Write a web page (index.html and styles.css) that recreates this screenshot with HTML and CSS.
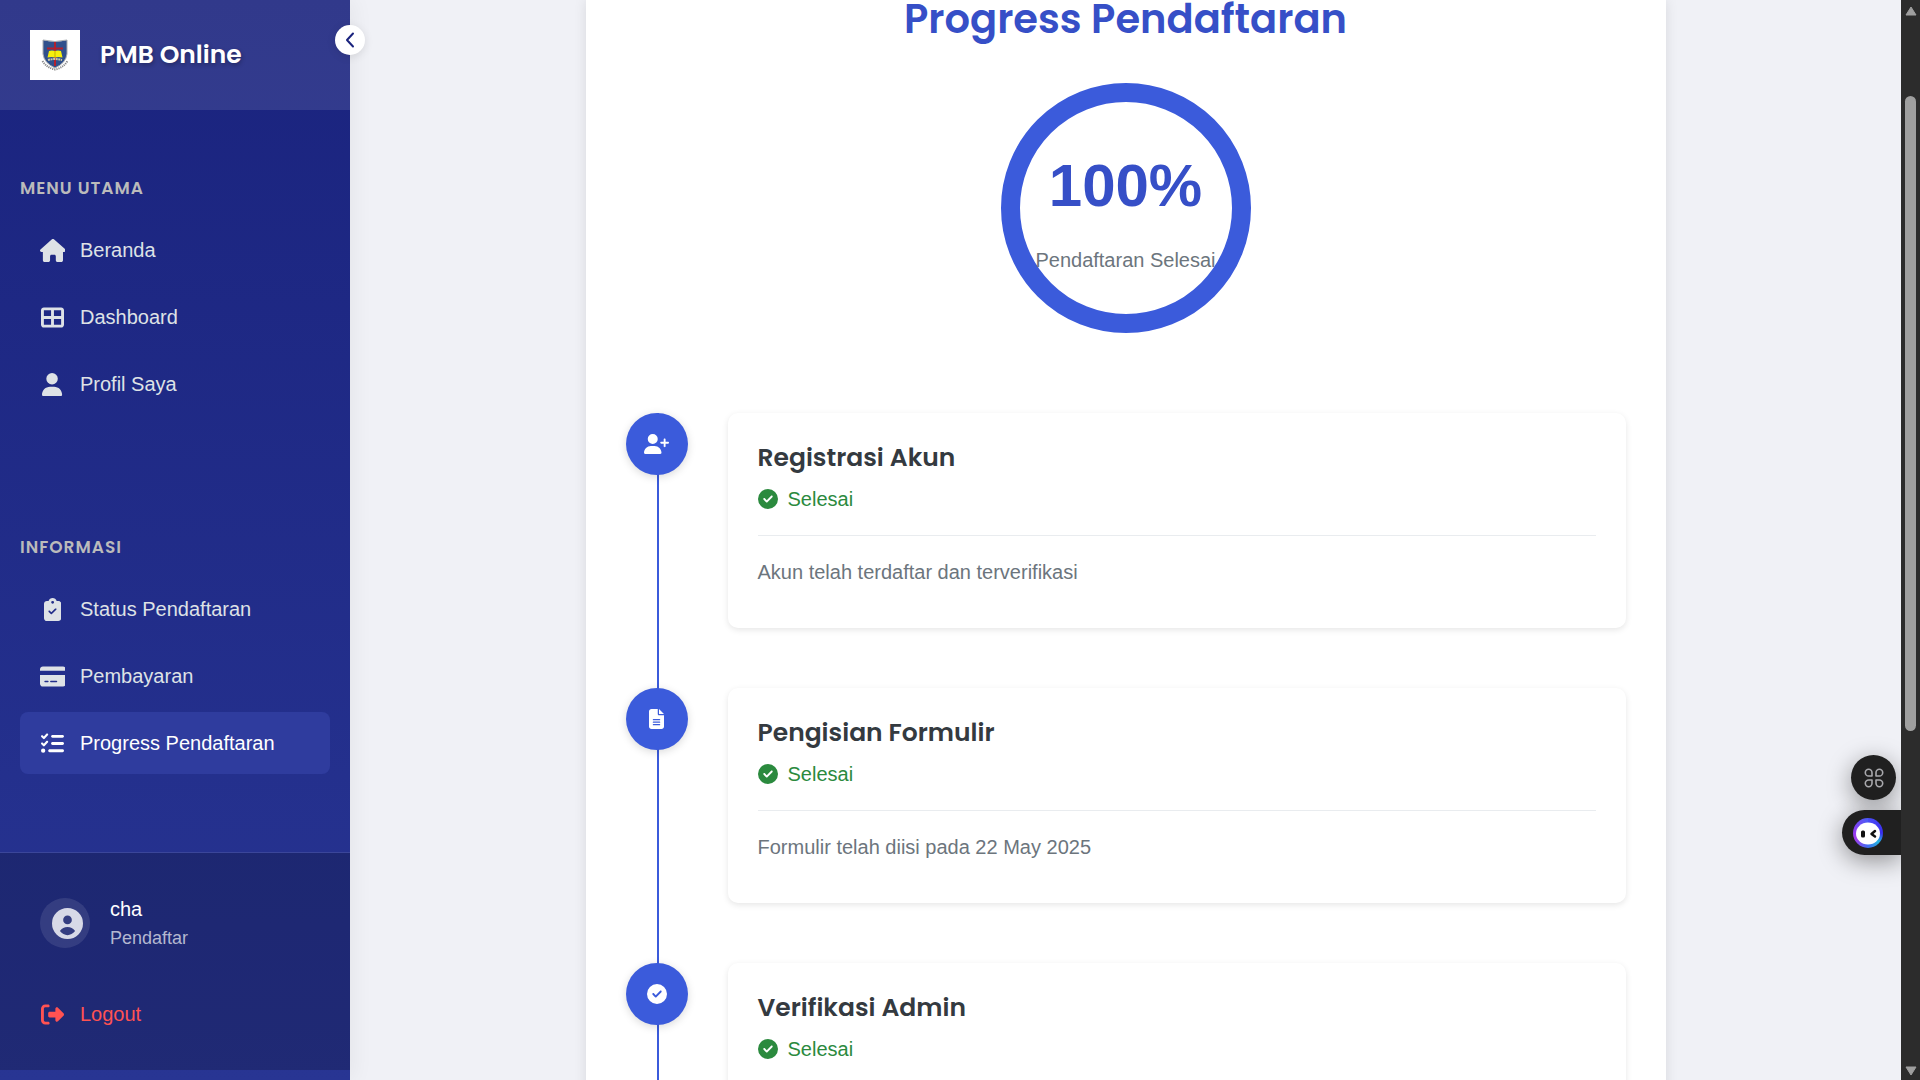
FILE: index.html
```html
<!DOCTYPE html>
<html lang="id">
<head>
<meta charset="utf-8">
<meta name="viewport" content="width=device-width, initial-scale=1">
<title>Progress Pendaftaran - PMB Online</title>
<link rel="stylesheet" href="styles.css">
</head>
<body>
<svg class="sprite" aria-hidden="true">
  <symbol id="check" viewBox="0 0 512 512"><path d="M256 512A256 256 0 1 0 256 0a256 256 0 1 0 0 512zM369 209L241 337c-9.4 9.4-24.6 9.4-33.9 0l-64-64c-9.4-9.4-9.4-24.6 0-33.9s24.6-9.4 33.9 0l47 47L335 175c9.4-9.4 24.6-9.4 33.9 0s9.4 24.6 0 33.9z"/></symbol>
</svg>
<aside class="sidebar">
  <header class="brand">
    <svg class="logo" viewBox="0 0 50 50" role="img" aria-label="Logo">
      <rect width="50" height="50" fill="#fff"/>
      <path d="M13 10Q25 13 37 10V24Q36 33 25 38Q14 33 13 24Z" fill="#30508c" stroke="#a9adb0" stroke-width="1"/>
      <path d="M24 12h2v24h-2zM17 17.500h16v2H17z" fill="#b3202c"/>
      <path d="M19 21q3-1 6 0q3-1 6 0l1.500 6.500q-4-1-7.500 0q-3.500-1-7.500 0z" fill="#f6ee0c"/>
      <path d="M25 21v6" stroke="#c3b400" stroke-width="1"/>
      <path d="M18 30q7-2 14 0" fill="none" stroke="#c9c8a8" stroke-width="2" stroke-dasharray="2 .6"/>
      <path d="M12.500 31Q17 38 25 39.500Q33 38 37.500 31" fill="none" stroke="#898989" stroke-width="2" stroke-dasharray="1.200 .9"/>
    </svg>
    <span class="brand-name">PMB Online</span>
  </header>
  <button class="toggle" type="button" aria-label="Tutup menu"><svg viewBox="0 0 10 18"><path d="M8 2.500 2 9l6 6.500"/></svg></button>
  <nav class="menu">
    <section class="menu-group">
      <h2 class="menu-title">MENU UTAMA</h2>
      <a class="item" href="#"><span class="icon"><svg viewBox="0 0 576 512"><path d="M575.8 255.5c0 18-15 32.1-32 32.1h-32l.7 160.2c0 2.7-.2 5.4-.5 8.1V472c0 22.1-17.9 40-40 40H456c-1.1 0-2.2 0-3.3-.1c-1.4 .1-2.8 .1-4.2 .1H416 392c-22.1 0-40-17.9-40-40V448 384c0-17.7-14.3-32-32-32H256c-17.7 0-32 14.3-32 32v64 24c0 22.1-17.9 40-40 40H160 128.1c-1.5 0-3-.1-4.5-.2c-1.2 .1-2.4 .2-3.6 .2H104c-22.1 0-40-17.9-40-40V360c0-.9 0-1.9 .1-2.8V287.6H32c-18 0-32-14-32-32.1c0-9 3-17 10-24L266.4 8c7-7 15-8 22-8s15 2 21 7L564.8 231.5c8 7 12 15 11 24z"/></svg></span>Beranda</a>
      <a class="item" href="#"><span class="icon"><svg viewBox="0 0 512 512"><path d="M448 96V224H288V96H448zm0 192V416H288V288H448zM224 224H64V96H224V224zM64 288H224V416H64V288zM64 32C28.700 32 0 60.700 0 96V416c0 35.300 28.700 64 64 64H448c35.300 0 64-28.700 64-64V96c0-35.300-28.700-64-64-64H64z"/></svg></span>Dashboard</a>
      <a class="item" href="#"><span class="icon"><svg viewBox="0 0 448 512"><path d="M224 256A128 128 0 1 0 224 0a128 128 0 1 0 0 256zm-45.7 48C79.8 304 0 383.8 0 482.3C0 498.7 13.3 512 29.7 512H418.3c16.4 0 29.7-13.3 29.7-29.7C448 383.8 368.2 304 269.7 304H178.3z"/></svg></span>Profil Saya</a>
    </section>
    <section class="menu-group">
      <h2 class="menu-title">INFORMASI</h2>
      <a class="item" href="#"><span class="icon"><svg viewBox="0 0 384 512"><path d="M192 0c-41.8 0-77.4 26.7-90.5 64H64C28.7 64 0 92.7 0 128V448c0 35.3 28.7 64 64 64H320c35.3 0 64-28.7 64-64V128c0-35.3-28.7-64-64-64H282.5C269.4 26.7 233.8 0 192 0zm0 64a32 32 0 1 1 0 64 32 32 0 1 1 0-64zM273 262L177 358c-7 7-18.500 7-25.400 0L103.600 310c-7-7-7-18.500 0-25.400s18.500-7 25.400 0l35.300 35.300L247.600 236.500c7-7 18.500-7 25.400 0s7 18.500 0 25.400z"/></svg></span>Status Pendaftaran</a>
      <a class="item" href="#"><span class="icon"><svg viewBox="0 0 576 512"><path d="M64 32C28.7 32 0 60.7 0 96v32H576V96c0-35.3-28.7-64-64-64H64zM576 224H0V416c0 35.3 28.7 64 64 64H512c35.3 0 64-28.7 64-64V224zM112 352h64c8.8 0 16 7.2 16 16s-7.2 16-16 16H112c-8.8 0-16-7.2-16-16s7.2-16 16-16zm112 16c0-8.8 7.2-16 16-16H368c8.8 0 16 7.2 16 16s-7.2 16-16 16H240c-8.8 0-16-7.2-16-16z"/></svg></span>Pembayaran</a>
      <a class="item active" href="#" aria-current="page"><span class="icon"><svg viewBox="0 0 512 512"><path d="M152.1 38.2c9.9 8.9 10.7 24 1.8 33.9l-72 80c-4.4 4.9-10.6 7.8-17.2 7.9s-12.9-2.4-17.6-7L7 113C-2.3 103.6-2.3 88.4 7 79s24.6-9.4 33.9 0l22.1 22.1 55.1-61.2c8.9-9.900 24-10.700 33.900-1.800zm0 160c9.900 8.900 10.700 24 1.800 33.900l-72 80c-4.400 4.900-10.600 7.800-17.200 7.900s-12.900-2.400-17.600-7L7 273c-9.400-9.400-9.400-24.600 0-33.900s24.600-9.400 33.900 0l22.100 22.100 55.100-61.200c8.900-9.900 24-10.700 33.900-1.800zM224 96c0-17.700 14.300-32 32-32H480c17.700 0 32 14.300 32 32s-14.300 32-32 32H256c-17.700 0-32-14.300-32-32zm0 160c0-17.700 14.300-32 32-32H480c17.700 0 32 14.300 32 32s-14.300 32-32 32H256c-17.700 0-32-14.300-32-32zM160 416c0-17.700 14.300-32 32-32H480c17.700 0 32 14.300 32 32s-14.300 32-32 32H192c-17.700 0-32-14.300-32-32zM48 368a48 48 0 1 1 0 96 48 48 0 1 1 0-96z"/></svg></span>Progress Pendaftaran</a>
    </section>
  </nav>
  <footer class="account">
    <div class="user">
      <span class="avatar"><svg viewBox="0 0 20 20"><path fill-rule="evenodd" d="M10 0a10 10 0 1 1 0 20a10 10 0 1 1 0-20zM10 4.900a2.800 2.800 0 1 0 0 5.600a2.800 2.800 0 1 0 0-5.600zM5.100 14.900C6.500 16.600 8.200 17.500 10 17.500S13.500 16.600 14.900 14.900C13.700 13.200 12 12.300 10 12.300S6.300 13.200 5.100 14.900z"/></svg></span>
      <div class="who"><span class="user-name">cha</span><span class="role">Pendaftar</span></div>
    </div>
    <a class="item logout" href="#"><span class="icon"><svg viewBox="0 0 512 512"><path d="M377.9 105.9L500.7 228.7c7.2 7.2 11.3 17.1 11.3 27.3s-4.1 20.1-11.3 27.3L377.9 406.1c-6.4 6.4-15 9.9-24 9.9c-18.7 0-33.9-15.2-33.9-33.9l0-62.1-128 0c-17.7 0-32-14.3-32-32l0-64c0-17.7 14.3-32 32-32l128 0 0-62.1c0-18.7 15.2-33.9 33.9-33.9c9 0 17.6 3.6 24 9.9zM160 96L96 96c-17.700 0-32 14.300-32 32l0 256c0 17.700 14.300 32 32 32l64 0c17.700 0 32 14.300 32 32s-14.300 32-32 32l-64 0c-53 0-96-43-96-96L0 128C0 75 43 32 96 32l64 0c17.700 0 32 14.300 32 32s-14.300 32-32 32z"/></svg></span>Logout</a>
  </footer>
</aside>
<main class="content">
  <div class="panel">
    <h1 class="page-title">Progress Pendaftaran</h1>
    <div class="ring"><strong class="percent">100%</strong><span class="ring-label">Pendaftaran Selesai</span></div>
    <ol class="steps">
      <li class="step">
        <span class="marker"><svg viewBox="0 0 640 512"><path d="M96 128a128 128 0 1 1 256 0A128 128 0 1 1 96 128zM0 482.3C0 383.8 79.8 304 178.3 304h91.4C368.2 304 448 383.8 448 482.3c0 16.4-13.3 29.7-29.7 29.7H29.7C13.3 512 0 498.7 0 482.3zM504 312V248H440c-13.3 0-24-10.7-24-24s10.7-24 24-24h64V136c0-13.3 10.7-24 24-24s24 10.7 24 24v64h64c13.3 0 24 10.7 24 24s-10.7 24-24 24H552v64c0 13.3-10.7 24-24 24s-24-10.7-24-24z"/></svg></span>
        <article class="step-card"><h3 class="step-title">Registrasi Akun</h3><p class="status"><svg><use href="#check"/></svg>Selesai</p><p class="detail">Akun telah terdaftar dan terverifikasi</p></article>
      </li>
      <li class="step">
        <span class="marker"><svg viewBox="0 0 384 512"><path d="M64 0C28.7 0 0 28.7 0 64V448c0 35.3 28.7 64 64 64H320c35.3 0 64-28.7 64-64V160H256c-17.7 0-32-14.3-32-32V0H64zM256 0V128H384L256 0zM112 256H272c8.8 0 16 7.2 16 16s-7.2 16-16 16H112c-8.8 0-16-7.2-16-16s7.2-16 16-16zm0 64H272c8.8 0 16 7.2 16 16s-7.2 16-16 16H112c-8.8 0-16-7.2-16-16s7.2-16 16-16zm0 64H272c8.8 0 16 7.2 16 16s-7.2 16-16 16H112c-8.8 0-16-7.2-16-16s7.2-16 16-16z"/></svg></span>
        <article class="step-card"><h3 class="step-title">Pengisian Formulir</h3><p class="status"><svg><use href="#check"/></svg>Selesai</p><p class="detail">Formulir telah diisi pada 22 May 2025</p></article>
      </li>
      <li class="step">
        <span class="marker"><svg viewBox="0 0 512 512"><use href="#check"/></svg></span>
        <article class="step-card"><h3 class="step-title">Verifikasi Admin</h3><p class="status"><svg><use href="#check"/></svg>Selesai</p><p class="detail"></p></article>
      </li>
    </ol>
  </div>
</main>
<div class="floating">
  <button class="apps" type="button" aria-label="Aplikasi"><svg viewBox="0 0 20 20"><path d="M8 8H4.650A3.350 3.350 0 1 1 8 4.650zM12 8h3.350A3.350 3.350 0 1 0 12 4.650zM8 12H4.650A3.350 3.350 0 1 0 8 15.350zM12 12h3.350A3.350 3.350 0 1 1 12 15.350z"/></svg></button>
  <button class="assistant" type="button" aria-label="Asisten"><span class="face"><svg viewBox="0 0 30 30"><ellipse cx="15" cy="15.500" rx="12" ry="11" fill="#fff"/><rect x="8" y="12.500" width="4" height="7" rx="1.500" fill="#111"/><path d="M22 13l-3.500 3 3.500 2.500" fill="none" stroke="#111" stroke-width="2.500" stroke-linecap="round" stroke-linejoin="round"/></svg></span></button>
</div>
<div class="scrollbar" aria-hidden="true">
  <svg viewBox="0 0 12 10"><path d="M6 1 11 9H1z"/></svg>
  <div class="track"><div class="thumb"></div></div>
  <svg viewBox="0 0 12 10"><path d="M6 9 1 1h10z"/></svg>
</div>
</body>
</html>
```
FILE: styles.css
```css
* { box-sizing: border-box; }
body {
  margin: 0;
  height: 100vh;
  overflow: hidden;
  display: flex;
  background: #f0f1f6;
  font: 20px/30px "Liberation Sans", Arial, sans-serif;
}
h1, h2, h3, p, ol { margin: 0; padding: 0; }
button { border: 0; padding: 0; cursor: pointer; }
a { text-decoration: none; }
.sprite { position: absolute; width: 0; height: 0; }

.sidebar {
  position: relative;
  z-index: 1;
  flex: 0 0 350px;
  display: flex;
  flex-direction: column;
  padding-bottom: 10px;
  background: linear-gradient(180deg, #1a237e, #283593);
  box-shadow: 4px 0 20px rgba(0, 0, 0, .05);
}
.brand {
  display: flex;
  align-items: center;
  gap: 20px;
  padding: 30px;
  background: rgba(255, 255, 255, .1);
}
.logo { width: 50px; height: 50px; }
.brand-name {
  color: #fff;
  font: 600 25px/50px Poppins, Inter, sans-serif;
  text-shadow: 1px 2px 4px rgba(0, 0, 0, .3);
}
.toggle {
  position: absolute;
  top: 25px;
  right: -15px;
  width: 30px;
  height: 30px;
  display: grid;
  place-items: center;
  border-radius: 50%;
  background: #fff;
  box-shadow: 0 2px 10px rgba(0, 0, 0, .1);
}
.toggle svg { width: 10px; height: 18px; fill: none; stroke: #1a237e; stroke-width: 2; stroke-linecap: round; stroke-linejoin: round; }
.menu { display: flex; flex-direction: column; gap: 120px; padding: 66px 20px 0; }
.menu-group { display: flex; flex-direction: column; gap: 5px; }
.menu-title {
  margin-bottom: 14px;
  color: #bbb;
  font: 600 17px/24px Poppins, Inter, sans-serif;
  letter-spacing: 1px;
}
.item {
  display: flex;
  align-items: center;
  gap: 15px;
  padding: 16px 20px;
  border-radius: 8px;
  color: #dee2e6;
}
.item.active { background: #2f3c9e; color: #fff; }
.item.logout { color: #ff5252; }
.icon { width: 25px; display: flex; justify-content: center; }
.icon svg { flex: none; height: 23px; fill: currentColor; }
.account {
  margin-top: auto;
  padding: 25px 20px;
  border-top: 1px solid rgba(255, 255, 255, .1);
  background: rgba(0, 0, 0, .2);
  background-clip: padding-box;
}
.user { display: flex; align-items: center; gap: 20px; padding: 16px 20px; margin-bottom: 15px; }
.avatar {
  width: 50px;
  height: 50px;
  display: grid;
  place-items: center;
  padding-left: 5px;
  border-radius: 50%;
  background: rgba(255, 255, 255, .1);
}
.avatar svg { width: 31px; height: 31px; fill: #d7d9e7; }
.who { display: flex; flex-direction: column; }
.user-name { color: #fff; }
.role { color: #b4b7d0; font-size: 18px; line-height: 28px; }

.content { flex: 1; display: flex; justify-content: center; align-items: flex-start; padding: 0 100px; }
.panel {
  flex: 0 1 1080px;
  padding: 0 40px 40px;
  background: #fff;
  box-shadow: 0 0 12px rgba(0, 0, 0, .1);
}
.page-title {
  padding-bottom: 45px;
  color: #364fc7;
  font: 600 40px/38px Poppins, Inter, sans-serif;
  text-align: center;
}
.ring {
  width: 250px;
  height: 250px;
  margin: 0 auto 80px;
  border: 19px solid #3b5bdb;
  border-radius: 50%;
  display: flex;
  flex-direction: column;
  align-items: center;
  justify-content: center;
}
.percent { color: #364fc7; font-size: 60px; line-height: 90px; }
.ring-label { padding-top: 14px; color: #6c757d; white-space: nowrap; }

.steps { list-style: none; }
.step { position: relative; display: flex; align-items: flex-start; gap: 40px; padding-bottom: 60px; }
.step::before {
  content: "";
  position: absolute;
  top: 0;
  bottom: 0;
  left: 31px;
  width: 2px;
  background: #3b5bdb;
}
.marker {
  position: relative;
  flex: none;
  width: 62px;
  height: 62px;
  display: grid;
  place-items: center;
  border-radius: 50%;
  background: #3b5bdb;
  box-shadow: 0 2px 8px rgba(0, 0, 0, .15);
}
.marker svg { height: 20px; fill: #fff; }
.step-card {
  flex: 1;
  min-height: 215px;
  padding: 30px;
  border-radius: 10px;
  background: #fff;
  box-shadow: 0 2px 6px rgba(0, 0, 0, .1);
}
.step-title { color: #343a40; font: 600 25px/30px Poppins, Inter, sans-serif; }
.status { display: flex; align-items: center; gap: 10px; padding: 11px 0 21px; border-bottom: 1px solid #e9ecef; color: #2b8a3e; }
.status svg { width: 20px; height: 20px; fill: currentColor; }
.detail { padding-top: 21px; color: #6c757d; }

.floating {
  position: fixed;
  right: 19px;
  bottom: 225px;
  z-index: 2;
  display: flex;
  flex-direction: column;
  align-items: flex-end;
  gap: 10px;
}
.floating button { background: #202020; box-shadow: 0 6px 24px rgba(0, 0, 0, .4); }
.apps { width: 45px; height: 45px; margin-right: 5px; display: grid; place-items: center; border-radius: 50%; }
.apps svg { width: 20px; height: 20px; fill: none; stroke: #a9a9ad; stroke-width: 1.6; stroke-linejoin: round; }
.assistant { width: 59px; height: 45px; padding-left: 11px; border-radius: 23px 0 0 23px; }
.face { display: block; width: 30px; height: 30px; border-radius: 50%; background: conic-gradient(#4a4cf5, #3a2df0 25%, #25b5e0 36%, #3f6cf0 50%, #a23bea 68%, #8b3cf0 78%, #4a5cf5); }
.face svg { display: block; }

.scrollbar {
  position: relative;
  z-index: 3;
  flex: 0 0 19px;
  display: flex;
  flex-direction: column;
  align-items: center;
  padding: 6px 0 4px;
  background: #2c2c2c;
}
.scrollbar svg { width: 12px; height: 10px; fill: #9f9f9f; stroke: #9f9f9f; stroke-linejoin: round; }
.track { flex: 1; padding-top: 80px; }
.thumb { width: 11px; height: 65.5%; border-radius: 6px; background: #9f9f9f; }
```
